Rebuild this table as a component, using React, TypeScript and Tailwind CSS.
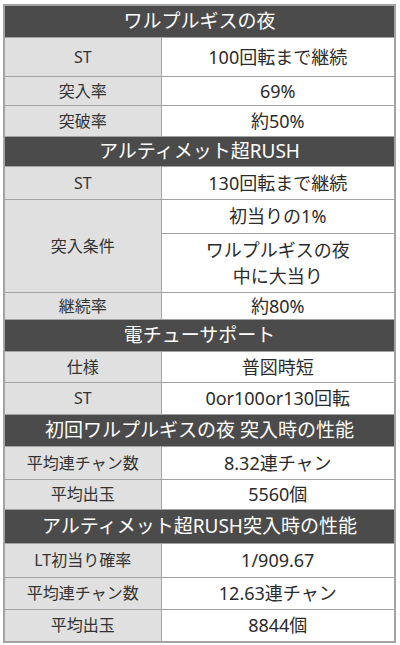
type Row =
  | { kind: "head"; title: string; h: number }
  | { kind: "row"; label: string; values: { text: string[]; h: number }[] };

const rows: Row[] = [
  { kind: "head", title: "ワルプルギスの夜", h: 32 },
  { kind: "row", label: "ST", values: [{ text: ["100回転まで継続"], h: 39 }] },
  { kind: "row", label: "突入率", values: [{ text: ["69%"], h: 29 }] },
  { kind: "row", label: "突破率", values: [{ text: ["約50%"], h: 31 }] },
  { kind: "head", title: "アルティメット超RUSH", h: 30 },
  { kind: "row", label: "ST", values: [{ text: ["130回転まで継続"], h: 33 }] },
  {
    kind: "row",
    label: "突入条件",
    values: [
      { text: ["初当りの1%"], h: 34 },
      { text: ["ワルプルギスの夜", "中に大当り"], h: 59 },
    ],
  },
  { kind: "row", label: "継続率", values: [{ text: ["約80%"], h: 27 }] },
  { kind: "head", title: "電チューサポート", h: 32 },
  { kind: "row", label: "仕様", values: [{ text: ["普図時短"], h: 31 }] },
  { kind: "row", label: "ST", values: [{ text: ["0or100or130回転"], h: 32 }] },
  { kind: "head", title: "初回ワルプルギスの夜 突入時の性能", h: 32 },
  { kind: "row", label: "平均連チャン数", values: [{ text: ["8.32連チャン"], h: 33 }] },
  { kind: "row", label: "平均出玉", values: [{ text: ["5560個"], h: 30 }] },
  { kind: "head", title: "アルティメット超RUSH突入時の性能", h: 34 },
  { kind: "row", label: "LT初当り確率", values: [{ text: ["1/909.67"], h: 34 }] },
  { kind: "row", label: "平均連チャン数", values: [{ text: ["12.63連チャン"], h: 32 }] },
  { kind: "row", label: "平均出玉", values: [{ text: ["8844個"], h: 33 }] },
];

const font = { fontFamily: '"Noto Sans", "Noto Sans CJK JP", sans-serif' };

export default function App() {
  return (
    <div className="w-[400px] h-[645px] bg-white pt-[4px] pl-[3px]" style={font}>
      <table className="w-[393px] border-collapse border-2 border-[#a3a3a3] table-fixed">
        <colgroup>
          <col className="w-[157px]" />
          <col />
        </colgroup>
        <tbody>
          {rows.flatMap((r, i) => {
            if (r.kind === "head") {
              return [
                <tr key={i} style={{ height: r.h }}>
                  <td
                    colSpan={2}
                    className="bg-[#4b4b4b] text-white text-center text-[19px] leading-none border border-[#a3a3a3] p-0"
                  >
                    {r.title}
                  </td>
                </tr>,
              ];
            }
            return r.values.map((v, j) => (
              <tr key={`${i}-${j}`} style={{ height: v.h }}>
                {j === 0 && (
                  <td
                    rowSpan={r.values.length}
                    className="bg-[#e0e0e0] text-[#333] text-center text-[16px] leading-none border border-[#a3a3a3] p-0"
                  >
                    {r.label}
                  </td>
                )}
                <td className="bg-white text-[#2b2b2b] text-center text-[18px] leading-[26px] border border-[#a3a3a3] p-0">
                  {v.text.map((t) => (
                    <div key={t}>{t}</div>
                  ))}
                </td>
              </tr>
            ));
          })}
        </tbody>
      </table>
    </div>
  );
}
